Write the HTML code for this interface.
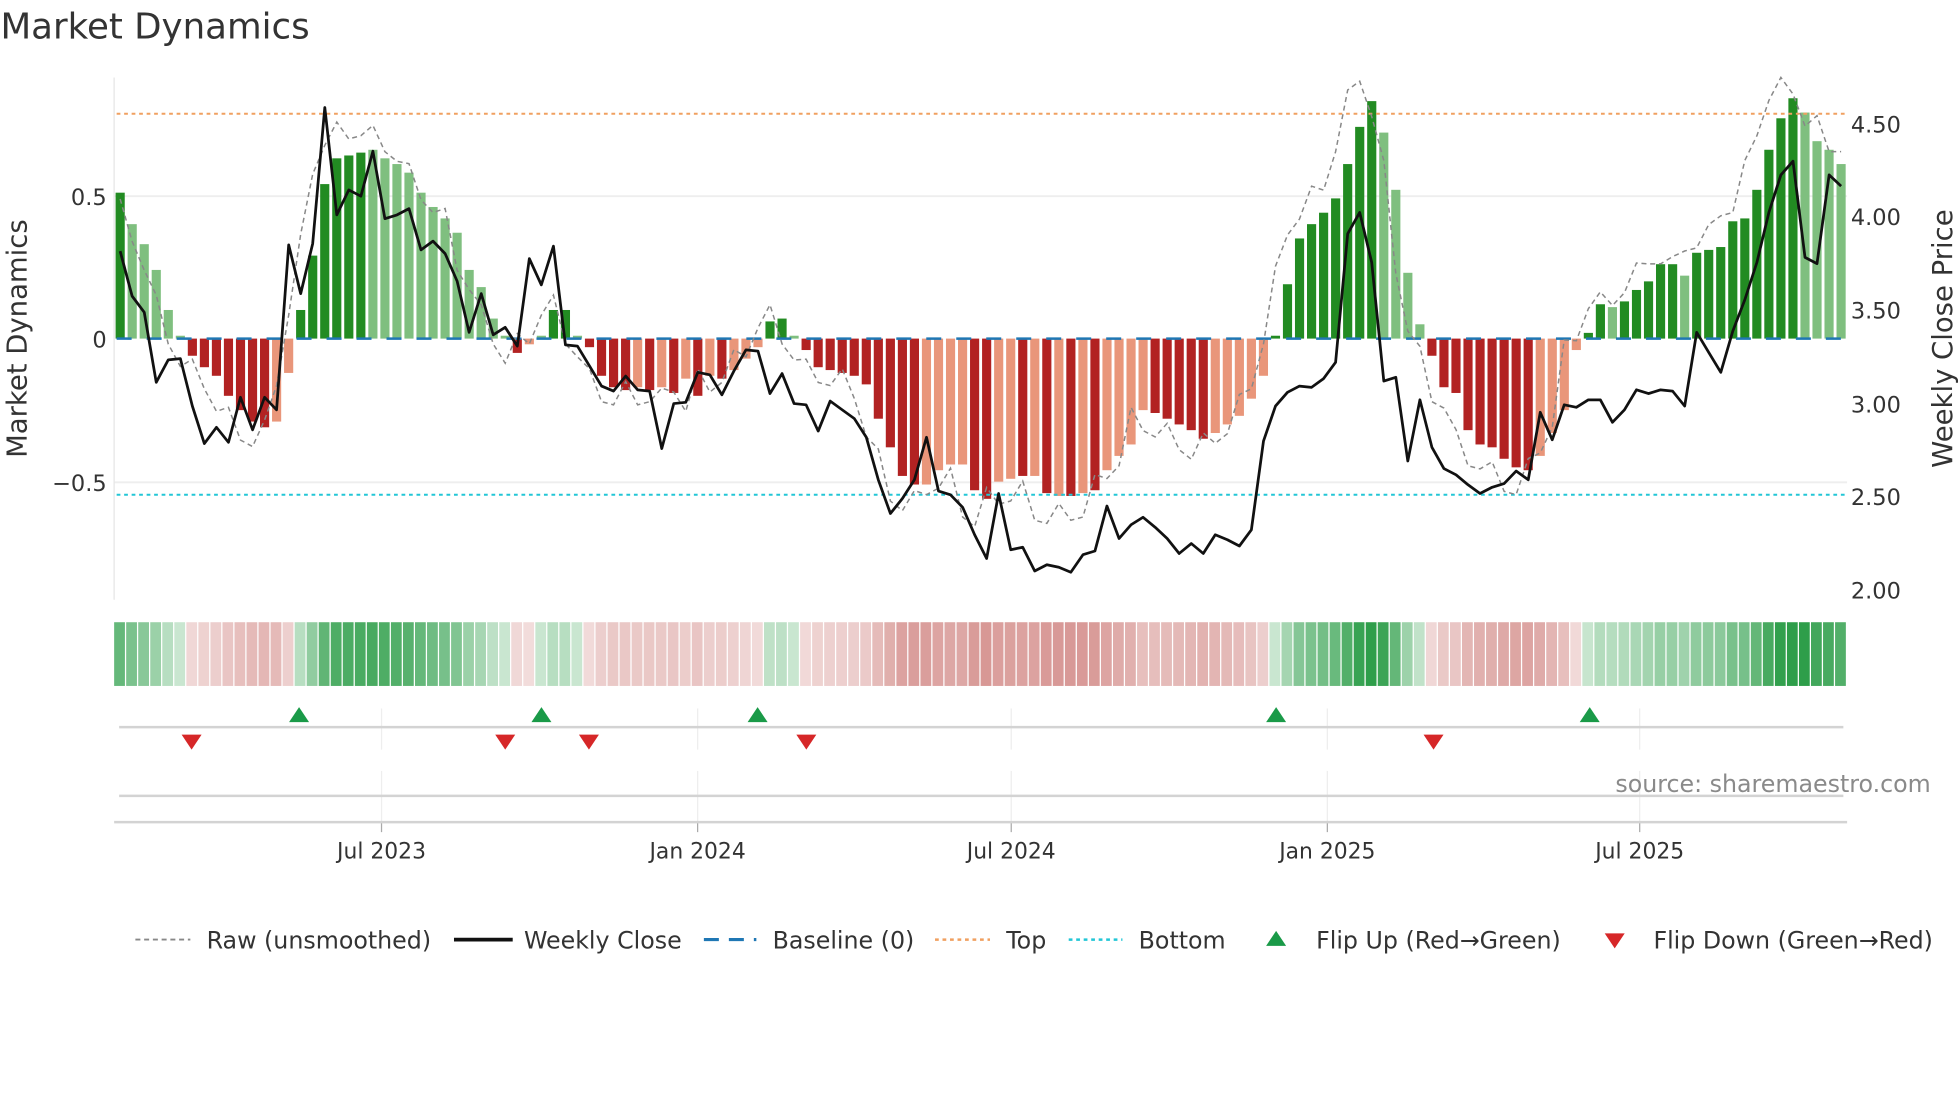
<!DOCTYPE html>
<html><head><meta charset="utf-8"><style>
html,body{margin:0;padding:0;background:#fff;width:1960px;height:1102px;overflow:hidden}
svg{display:block}
text{font-family:"DejaVu Sans","Liberation Sans",sans-serif;fill:#333}
</style></head><body>
<svg id="s" width="1960" height="1102" viewBox="0 0 1568 882" xmlns="http://www.w3.org/2000/svg">
<text x="0" y="31" font-size="28.5">Market Dynamics</text>
<g id="grid"></g>
<g id="bars"></g>
<g id="lines"></g>
<g id="heat"></g>
<g id="rest"></g>
<text x="1545" y="634" font-size="19" style="fill:#8a8a8a" text-anchor="end">source: sharemaestro.com</text>
</svg>
<script>
var NS="http://www.w3.org/2000/svg";
function el(p,t,a,txt){var e=document.createElementNS(NS,t);for(var k in a)e.setAttribute(k,a[k]);if(txt!==undefined)e.textContent=txt;document.getElementById(p).appendChild(e);return e;}
var B="D.51 L.40 L.33 L.24 L.10 L.01 R-.06 R-.10 R-.13 R-.20 R-.25 R-.29 R-.31 S-.29 S-.12 D.10 D.29 D.54 D.63 D.64 D.65 L.66 L.63 L.61 L.58 L.51 L.46 L.42 L.37 L.24 L.18 L.07 L.01 R-.05 S-.02 L.01 D.10 D.10 L.01 R-.03 R-.13 R-.17 R-.18 S-.17 R-.18 S-.17 R-.19 S-.14 R-.20 S-.13 R-.14 S-.11 S-.07 S-.03 D.06 D.07 L.01 R-.04 R-.10 R-.11 R-.12 R-.13 R-.16 R-.28 R-.38 R-.48 R-.51 S-.51 S-.46 S-.44 S-.44 R-.53 R-.56 S-.50 S-.49 R-.48 S-.48 R-.54 S-.55 R-.55 S-.54 R-.53 S-.46 S-.41 S-.37 S-.25 R-.26 R-.28 R-.30 R-.32 R-.35 S-.33 S-.30 S-.27 S-.21 S-.13 D.01 D.19 D.35 D.40 D.44 D.49 D.61 D.74 D.83 L.72 L.52 L.23 L.05 R-.06 R-.17 R-.19 R-.32 R-.37 R-.38 R-.42 R-.45 R-.46 S-.41 S-.33 S-.25 S-.04 D.02 D.12 L.11 D.13 D.17 D.20 D.26 D.26 L.22 D.30 D.31 D.32 D.41 D.42 D.52 D.66 D.77 D.84 L.79 L.69 L.66 L.61".split(" ");
var P=[201,237,250,306,288,287,325,355,342,354,318,344,318,328,196,235,195,86,172,152,157,121,175,172,167,200,193,203,225,266,235,268,262,277,207,228,197,276,277,293,309,313,301,312,313,359,323,322,298,300,316,297,280,281,315,299,323,324,345,321,328,335,350,384,411,399,384,350,393,396,406,428,447,395,440,438,457,452,454,458,444,441,405,431,420,414,422,431,443,435,443,428,432,437,424,353,325,314,309,310,303,290,187,170,210,305,302,369,320,358,375,380,388,395,390,387,377,384,330,352,324,326,320,320,338,328,312,315,312,313,325,266,282,298,265,240,210,170,140,129,206,211,140,149];
var n=B.length,x0=91,x1=1478,w=(x1-x0)/n,Z=271,K=229;
var col={D:"#228b22",L:"#7fbf7f",R:"#b22222",S:"#e9967a"};
[157,386].forEach(function(y){el("grid","line",{x1:91,x2:1478,y1:y,y2:y,stroke:"#eeeeee","stroke-width":1.5});});
el("grid","line",{x1:91,x2:91,y1:62,y2:480,stroke:"#e6e6e6","stroke-width":1});
var vals=[];
for(var i=0;i<n;i++){var t=B[i][0],v=parseFloat(B[i].slice(1));vals.push(v);
 var x=x0+i*w+w*0.12,h=Math.abs(v)*K,y=v>=0?Z-h:Z;
 el("bars","rect",{x:x.toFixed(2),y:y.toFixed(2),width:(w*0.76).toFixed(2),height:Math.max(h,1).toFixed(2),fill:col[t]});}
el("lines","line",{x1:93,x2:1476,y1:91,y2:91,stroke:"#f0a060","stroke-width":1.6,"stroke-dasharray":"3,3"});
el("lines","line",{x1:93,x2:1476,y1:396,y2:396,stroke:"#22c6d6","stroke-width":1.6,"stroke-dasharray":"3,3"});
el("lines","line",{x1:93,x2:1476,y1:271,y2:271,stroke:"#1f77b4","stroke-width":2,"stroke-dasharray":"12,12"});
var rp="";for(var i=0;i<n;i++){var v=vals[Math.min(i+1,n-1)]*1.12+(i%3==0?0.04:-0.03);var y=Math.max(62,Z-v*K);rp+=(i?"L":"M")+(x0+i*w+w/2).toFixed(1)+","+y.toFixed(1);}
el("lines","path",{d:rp,fill:"none",stroke:"#888","stroke-width":1.2,"stroke-dasharray":"4,3"});
var pp="";for(var i=0;i<n&&i<P.length;i++){pp+=(i?"L":"M")+(x0+i*w+w/2).toFixed(1)+","+P[i];}
el("lines","path",{d:pp,fill:"none",stroke:"#111","stroke-width":2.2,"stroke-linejoin":"round"});
function mix(a,b,t){return "rgb("+[0,1,2].map(function(k){return Math.round(a[k]+(b[k]-a[k])*t)}).join(",")+")";}
for(var i=0;i<n;i++){var v=vals[i],t=Math.min(1,0.25+Math.abs(v)*0.95);
 var c=v>=0?mix([255,255,255],[46,158,74],t):mix([255,255,255],[196,100,96],t*0.85);
 el("heat","rect",{x:(x0+i*w).toFixed(2),y:498,width:(w-1).toFixed(2),height:51,fill:c});}
[305,558,809,1062,1312].forEach(function(x){el("rest","line",{x1:x,x2:x,y1:567,y2:600,stroke:"#eeeeee"});el("rest","line",{x1:x,x2:x,y1:617,y2:658,stroke:"#eeeeee"});el("rest","line",{x1:x,x2:x,y1:658,y2:666,stroke:"#aaa"});});
el("rest","line",{x1:95,x2:1475,y1:582,y2:582,stroke:"#d3d3d3","stroke-width":2});
el("rest","line",{x1:95,x2:1475,y1:637,y2:637,stroke:"#d3d3d3","stroke-width":2});
el("rest","line",{x1:91,x2:1478,y1:658,y2:658,stroke:"#d3d3d3","stroke-width":2});
function up(x,y){el("rest","path",{d:"M"+x+","+(y-7)+"L"+(x+8)+","+(y+5)+"L"+(x-8)+","+(y+5)+"Z",fill:"#1a9a48"});}
function dn(x,y){el("rest","path",{d:"M"+(x-8)+","+(y-5)+"L"+(x+8)+","+(y-5)+"L"+x+","+(y+7)+"Z",fill:"#d62728"});}
[239,433,606,1021,1272].forEach(function(x){up(x,573)});
[153,404,471,645,1147].forEach(function(x){dn(x,593)});
[["Jul 2023",305],["Jan 2024",558],["Jul 2024",809],["Jan 2025",1062],["Jul 2025",1312]].forEach(function(a){el("rest","text",{x:a[1],y:687,"font-size":17.5,"text-anchor":"middle"},a[0]);});
[["0.5",157],["0",271],["\u22120.5",386]].forEach(function(a){el("rest","text",{x:85,y:a[1]+7,"font-size":18,"text-anchor":"end"},a[0]);});
[["4.50",99],["4.00",173],["3.50",248],["3.00",323],["2.50",397],["2.00",472]].forEach(function(a){el("rest","text",{x:1481,y:a[1]+7,"font-size":18},a[0]);});
el("rest","text",{x:0,y:0,"font-size":22,"text-anchor":"middle",transform:"translate(21,271) rotate(-90)"},"Market Dynamics");
el("rest","text",{x:0,y:0,"font-size":22,"text-anchor":"middle",transform:"translate(1562,271) rotate(-90)"},"Weekly Close Price");
var LY=752,FS=19;
el("rest","line",{x1:108,x2:152,y1:LY,y2:LY,stroke:"#888","stroke-width":1.5,"stroke-dasharray":"4,3"});
el("rest","text",{x:165,y:LY+7,"font-size":FS},"Raw (unsmoothed)");
el("rest","line",{x1:363,x2:410,y1:LY,y2:LY,stroke:"#111","stroke-width":3});
el("rest","text",{x:419,y:LY+7,"font-size":FS},"Weekly Close");
el("rest","line",{x1:563,x2:605,y1:LY,y2:LY,stroke:"#1f77b4","stroke-width":2.5,"stroke-dasharray":"12,8"});
el("rest","text",{x:618,y:LY+7,"font-size":FS},"Baseline (0)");
el("rest","line",{x1:748,x2:792,y1:LY,y2:LY,stroke:"#f0a060","stroke-width":2,"stroke-dasharray":"3,3"});
el("rest","text",{x:805,y:LY+7,"font-size":FS},"Top");
el("rest","line",{x1:855,x2:898,y1:LY,y2:LY,stroke:"#22c6d6","stroke-width":2,"stroke-dasharray":"3,3"});
el("rest","text",{x:911,y:LY+7,"font-size":FS},"Bottom");
up(1021,LY);el("rest","text",{x:1053,y:LY+7,"font-size":FS},"Flip Up (Red\u2192Green)");
dn(1292,LY);el("rest","text",{x:1323,y:LY+7,"font-size":FS},"Flip Down (Green\u2192Red)");
</script>
</body></html>
